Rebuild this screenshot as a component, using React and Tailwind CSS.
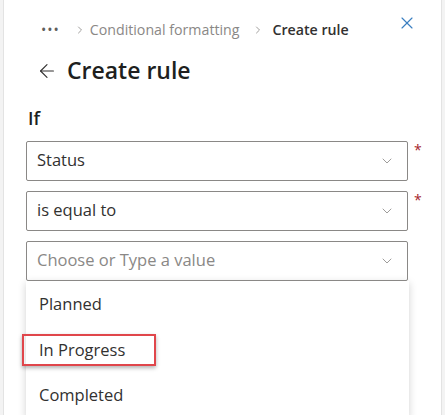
import { ArrowLeft, ChevronDown, ChevronRight, X } from 'lucide-react';

const font = { fontFamily: '"Segoe UI", "Open Sans", sans-serif' };

const Select = ({ value, placeholder, required }) => (
  <div className="flex items-start">
    <div className="flex h-[40px] w-[382px] items-center justify-between rounded-[2px] border border-[#8a8886] pl-[10px] pr-[12px]">
      <span className={`text-[16.5px] ${value ? 'text-[#323130]' : 'text-[#8a8886]'}`}>
        {value || placeholder}
      </span>
      <ChevronDown size={16} strokeWidth={1.25} className="text-[#8a8886]" />
    </div>
    {required && <span className="ml-[6px] mt-[-2px] text-[14px] text-[#a4262c]">*</span>}
  </div>
);

export default function App() {
  return (
    <div className="h-[415px] w-[445px] bg-[#f3f3f3] px-[3px]" style={font}>
      <div className="h-full border-x border-[#e3e3e3] bg-white pl-[22px]">
        <div className="flex items-start justify-between pr-[24px] pt-[13px]">
          <div className="mt-[6px] flex items-center">
            <span className="ml-[15px] text-[14px] tracking-[1px] text-[#605e5c]">•••</span>
            <ChevronRight size={12} className="ml-[14px] text-[#a19f9d]" />
            <span className="ml-[4px] text-[14.2px] text-[#8a8886]">Conditional formatting</span>
            <ChevronRight size={12} className="ml-[13px] text-[#a19f9d]" />
            <span className="ml-[8px] text-[14.2px] font-semibold text-[#323130]">Create rule</span>
          </div>
          <X size={20} strokeWidth={1.4} className="text-[#3a7fc1]" />
        </div>
        <div className="mt-[13px] flex items-center">
          <ArrowLeft size={22} strokeWidth={1.25} className="ml-[10px] text-[#323130]" />
          <span className="ml-[9px] text-[23px] font-semibold text-[#201f1e]">Create rule</span>
        </div>
        <div className="mt-[17px] pl-[2px] text-[18px] font-semibold text-[#201f1e]">If</div>
        <div className="mt-[9px] flex flex-col gap-[10px]">
          <Select value="Status" required />
          <Select value="is equal to" required />
          <Select placeholder="Choose or Type a value" />
        </div>
        <div className="w-[383px] bg-white shadow-[0_2px_8px_rgba(0,0,0,0.18)]">
          <div className="flex h-[47px] items-center pl-[13px] text-[16.5px] text-[#323130]">Planned</div>
          <div className="flex h-[45px] items-center">
            <div className="ml-[-4px] flex h-[32px] w-[134px] items-center border-2 border-[#e0464b] pl-[15px] text-[16.5px] text-[#323130] shadow-[0_2px_4px_rgba(0,0,0,0.3)]">
              In Progress
            </div>
          </div>
          <div className="flex h-[45px] items-center pl-[13px] text-[16.5px] text-[#323130]">Completed</div>
        </div>
      </div>
    </div>
  );
}
